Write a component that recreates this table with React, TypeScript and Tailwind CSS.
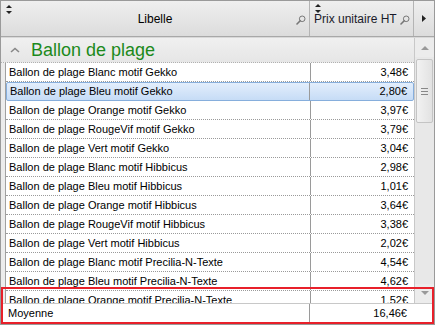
import React from "react";

const rows = [
  ["Ballon de plage Blanc motif Gekko", "3,48€"],
  ["Ballon de plage Bleu motif Gekko", "2,80€"],
  ["Ballon de plage Orange motif Gekko", "3,97€"],
  ["Ballon de plage RougeVif motif Gekko", "3,79€"],
  ["Ballon de plage Vert motif Gekko", "3,04€"],
  ["Ballon de plage Blanc motif Hibbicus", "2,98€"],
  ["Ballon de plage Bleu motif Hibbicus", "1,01€"],
  ["Ballon de plage Orange motif Hibbicus", "3,64€"],
  ["Ballon de plage RougeVif motif Hibbicus", "3,38€"],
  ["Ballon de plage Vert motif Hibbicus", "2,02€"],
  ["Ballon de plage Blanc motif Precilia-N-Texte", "4,54€"],
  ["Ballon de plage Bleu motif Precilia-N-Texte", "4,62€"],
  ["Ballon de plage Orange motif Precilia-N-Texte", "1,52€"],
];

function SortIcon() {
  return (
    <svg width="6" height="9" viewBox="0 0 6 9" className="block">
      <path d="M3 0 L6 3 L0 3 Z" fill="#222" />
      <path d="M3 9 L6 6 L0 6 Z" fill="#222" />
    </svg>
  );
}

function SearchIcon() {
  return (
    <svg width="10" height="10" viewBox="0 0 10 10" className="block">
      <circle cx="6.2" cy="3.8" r="2.8" fill="none" stroke="#777" strokeWidth="1" />
      <path d="M4.2 5.8 L1 9" stroke="#777" strokeWidth="1.6" strokeLinecap="round" />
    </svg>
  );
}

export default function App() {
  return (
    <div
      className="relative w-[435px] h-[325px] bg-white border border-[#9a9a9a] overflow-hidden text-[11px] text-black"
      style={{ fontFamily: '"Liberation Sans", Arial, sans-serif' }}
    >
      {/* header */}
      <div className="flex h-[36px] bg-gradient-to-b from-[#efefef] to-[#dcdcdc] border-b border-[#a8a8a8]">
        <div className="relative flex-1 flex items-center justify-center border-r border-[#b4b4b4]">
          <div className="absolute left-[5px] top-[4px]"><SortIcon /></div>
          <span className="text-[12px]">Libelle</span>
          <div className="absolute right-[3px] top-[14px]"><SearchIcon /></div>
        </div>
        <div className="relative w-[104px] flex items-center pl-[4px] border-r border-[#b4b4b4]">
          <div className="absolute left-[5px] top-[3px]"><SortIcon /></div>
          <span className="text-[12px] text-[#1a1a2a]">Prix unitaire HT</span>
          <div className="absolute right-[3px] top-[14px]"><SearchIcon /></div>
        </div>
        <div className="w-[20px] flex items-center justify-center">
          <svg width="4" height="7" viewBox="0 0 4 7"><path d="M0 0 L4 3.5 L0 7 Z" fill="#222" /></svg>
        </div>
      </div>

      <div className="flex h-[266px] border-t border-[#d8d8d8]">
        {/* body */}
        <div className="flex-1 flex flex-col overflow-hidden">
          <div className="flex items-center h-[25px] shrink-0 bg-gradient-to-b from-[#f0f0f0] to-[#e6e6e6] border-b border-dotted border-[#b0b0b0]">
            <svg width="10" height="6" viewBox="0 0 10 6" className="ml-[9px] mr-[11px]">
              <path d="M1 5 L5 1.5 L9 5" fill="none" stroke="#888" strokeWidth="1.6" />
            </svg>
            <span className="text-[18px] text-[#1c8a1c] leading-none">Ballon de plage</span>
          </div>
          <div className="flex-1 flex bg-[#ececec] overflow-hidden">
            <div className="w-[4px] shrink-0" />
            <div className="flex-1 flex flex-col bg-white border-l border-[#a0a0a0]">
              {rows.map(([name, price], i) => (
                <div
                  key={i}
                  className={
                    i === 1
                      ? "flex h-[19px] shrink-0 items-center rounded-[2px] border border-[#86aedc] bg-gradient-to-b from-[#e3eefc] to-[#c6dcf6]"
                      : "flex h-[19px] shrink-0 items-center border-b border-dotted border-[#9a9a9a]"
                  }
                >
                  <div className="flex-1 pl-[3px] h-full flex items-center border-r border-[#9a9a9a] whitespace-nowrap overflow-hidden">
                    {name}
                  </div>
                  <div className="w-[103px] pr-[6px] h-full flex items-center justify-end">{price}</div>
                </div>
              ))}
            </div>
          </div>
        </div>

        {/* scrollbar */}
        <div className="w-[20px] flex flex-col bg-[#e8e8e8] border-l border-[#c8c8c8]">
          <div className="h-[19px] flex items-center justify-center bg-[#ececec]">
            <svg width="8" height="5" viewBox="0 0 8 5"><path d="M0 5 L4 1 L8 5 Z" fill="#999" /></svg>
          </div>
          <div className="mt-[2px] mx-[1px] h-[64px] rounded-[2px] border border-[#c4c4c4] bg-gradient-to-r from-[#f2f2f2] to-[#e2e2e2] flex flex-col items-center justify-center gap-[2px]">
            <div className="w-[7px] h-px bg-[#888]" />
            <div className="w-[7px] h-px bg-[#888]" />
            <div className="w-[7px] h-px bg-[#888]" />
          </div>
          <div className="flex-1" />
          <div className="h-[19px] flex items-center justify-center bg-[#ececec]">
            <svg width="8" height="5" viewBox="0 0 8 5"><path d="M0 0 L4 4 L8 0 Z" fill="#999" /></svg>
          </div>
        </div>
      </div>

      {/* footer */}
      <div className="flex h-[20px] items-center bg-white border-t border-[#c8c8c8]">
        <div className="w-[309px] pl-[7px] h-full flex items-center border-r border-[#9a9a9a]">Moyenne</div>
        <div className="w-[103px] pr-[6px] h-full flex items-center justify-end">16,46€</div>
      </div>

      {/* highlight overlay */}
      <div className="absolute left-0 top-[286px] w-[433px] h-[37px] border-2 border-[#e8202a] pointer-events-none" />
    </div>
  );
}
